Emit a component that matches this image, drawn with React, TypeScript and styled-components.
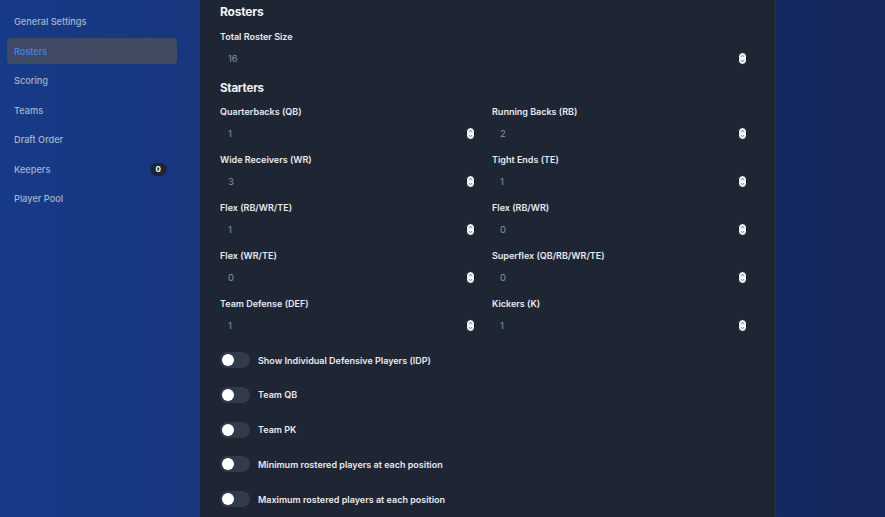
import styled, { createGlobalStyle } from "styled-components";

const GlobalStyle = createGlobalStyle`
  html, body {
    margin: 0;
    padding: 0;
  }
  body {
    font-family: "Inter", "Liberation Sans", sans-serif;
    background: linear-gradient(90deg, #173b88 0%, #163274 45%, #15275b 100%);
    height: 517px;
    overflow: hidden;
  }
`;

const navItems = [
  { label: "General Settings" },
  { label: "Rosters", active: true },
  { label: "Scoring" },
  { label: "Teams" },
  { label: "Draft Order" },
  { label: "Keepers", badge: "0" },
  { label: "Player Pool" },
];

const starters = [
  { label: "Quarterbacks (QB)", value: 1 },
  { label: "Running Backs (RB)", value: 2 },
  { label: "Wide Receivers (WR)", value: 3 },
  { label: "Tight Ends (TE)", value: 1 },
  { label: "Flex (RB/WR/TE)", value: 1 },
  { label: "Flex (RB/WR)", value: 0 },
  { label: "Flex (WR/TE)", value: 0 },
  { label: "Superflex (QB/RB/WR/TE)", value: 0 },
  { label: "Team Defense (DEF)", value: 1 },
  { label: "Kickers (K)", value: 1 },
];

const toggles = [
  "Show Individual Defensive Players (IDP)",
  "Team QB",
  "Team PK",
  "Minimum rostered players at each position",
  "Maximum rostered players at each position",
];

const Spinner = () => (
  <svg width="9" height="13" viewBox="0 0 9 13">
    <rect x="0.5" y="0.5" width="8" height="12" rx="4" fill="#f1f3f6" stroke="#0d1118" />
    <path d="M2.8 5 L4.5 3.3 L6.2 5" fill="none" stroke="#6b7280" strokeWidth="0.9" />
    <path d="M2.8 8 L4.5 9.7 L6.2 8" fill="none" stroke="#6b7280" strokeWidth="0.9" />
  </svg>
);

const NumberField = ({ label, value }: { label: string; value: number }) => (
  <Field>
    <FieldLabel>{label}</FieldLabel>
    <InputBox>
      <InputValue>{value}</InputValue>
      <Spinner />
    </InputBox>
  </Field>
);

export default function App() {
  return (
    <>
      <GlobalStyle />
      <Layout>
        <Sidebar>
          {navItems.map((item) => (
            <NavItem key={item.label} $active={!!item.active}>
              <span>{item.label}</span>
              {item.badge && <Badge>{item.badge}</Badge>}
            </NavItem>
          ))}
        </Sidebar>
        <Panel>
          <SectionTitle>Rosters</SectionTitle>
          <NumberField label="Total Roster Size" value={16} />
          <SubTitle>Starters</SubTitle>
          <Grid>
            {starters.map((s) => (
              <NumberField key={s.label} label={s.label} value={s.value} />
            ))}
          </Grid>
          <ToggleList>
            {toggles.map((t) => (
              <ToggleRow key={t}>
                <Switch>
                  <Knob />
                </Switch>
                <ToggleLabel>{t}</ToggleLabel>
              </ToggleRow>
            ))}
          </ToggleList>
        </Panel>
      </Layout>
    </>
  );
}

const Layout = styled.div`
  display: flex;
  flex-direction: row;
  height: 517px;
`;

const Sidebar = styled.nav`
  width: 200px;
  box-sizing: border-box;
  padding: 8px 23px 0 7px;
  display: flex;
  flex-direction: column;
  gap: 3.5px;
`;

const NavItem = styled.div<{ $active: boolean }>`
  height: 26px;
  display: flex;
  align-items: center;
  justify-content: space-between;
  padding: 1px 10px 0 7px;
  box-sizing: border-box;
  border-radius: 4px;
  font-size: 9.2px;
  font-weight: 500;
  color: ${(p) => (p.$active ? "#3b86f5" : "#a8b3c7")};
  background: ${(p) => (p.$active ? "rgba(72, 78, 92, 0.85)" : "transparent")};
`;

const Badge = styled.span`
  background: #1e2532;
  color: #ffffff;
  font-size: 8px;
  font-weight: 700;
  border-radius: 7px;
  padding: 1px 6px;
  line-height: 11px;
`;

const Panel = styled.main`
  width: 576px;
  box-sizing: border-box;
  background: #1f2633;
  padding: 3px 27px 0 20px;
  border-right: 1px solid #2a3342;
`;

const SectionTitle = styled.h2`
  margin: 0 0 8px;
  font-size: 12px;
  line-height: 18px;
  font-weight: 700;
  letter-spacing: -0.2px;
  color: #f1f3f6;
`;

const SubTitle = styled.h3`
  margin: 10px 0 7px;
  font-size: 11.5px;
  line-height: 18px;
  font-weight: 700;
  letter-spacing: -0.2px;
  color: #f1f3f6;
`;

const Field = styled.div`
  display: flex;
  flex-direction: column;
`;

const FieldLabel = styled.label`
  font-size: 9px;
  line-height: 15px;
  font-weight: 600;
  color: #e8eaee;
  margin-bottom: 3px;
`;

const InputBox = styled.div`
  height: 22px;
  display: flex;
  align-items: center;
  justify-content: space-between;
  padding: 0 1px 0 8px;
`;

const InputValue = styled.span`
  font-size: 9.5px;
  color: #8a93a3;
`;

const Grid = styled.div`
  display: grid;
  grid-template-columns: 1fr 1fr;
  column-gap: 16px;
  row-gap: 8px;
`;

const ToggleList = styled.div`
  margin-top: 16px;
  display: flex;
  flex-direction: column;
  gap: 18.8px;
`;

const ToggleRow = styled.div`
  height: 16px;
  display: flex;
  align-items: center;
  gap: 8px;
`;

const Switch = styled.div`
  width: 30px;
  height: 16px;
  border-radius: 8px;
  background: #323b4b;
  display: flex;
  align-items: center;
  padding-left: 2px;
  box-sizing: border-box;
`;

const Knob = styled.div`
  width: 12px;
  height: 12px;
  border-radius: 50%;
  background: #ffffff;
`;

const ToggleLabel = styled.span`
  font-size: 9px;
  font-weight: 600;
  color: #e8eaee;
`;
